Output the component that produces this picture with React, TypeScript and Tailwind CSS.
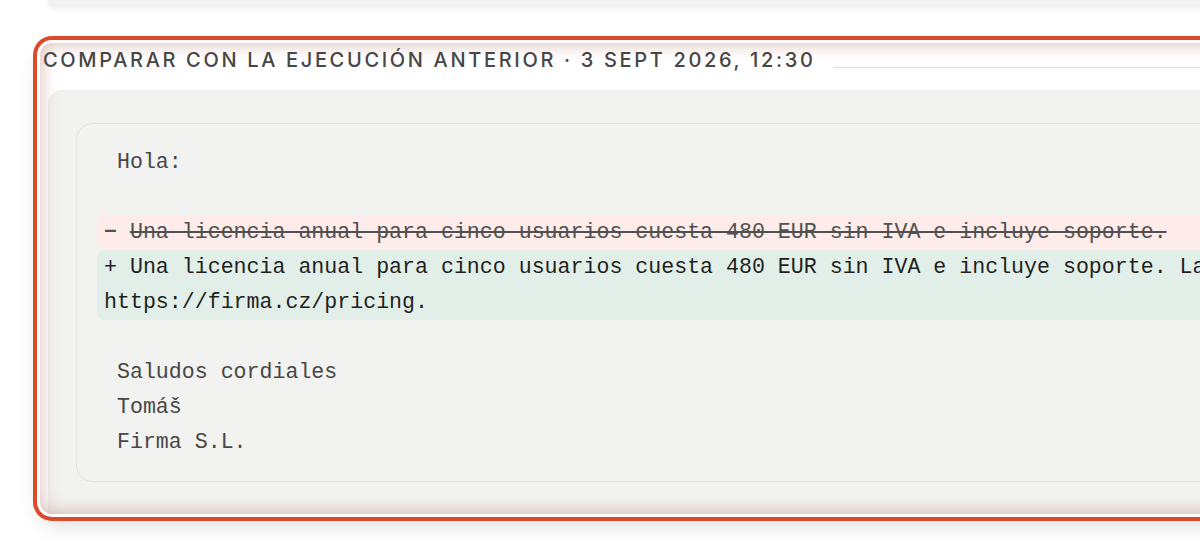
import React from 'react';

const mono = "font-['Liberation_Mono','DejaVu_Sans_Mono',monospace]";

type Line =
  | { kind: 'ctx'; text: string }
  | { kind: 'del'; text: string }
  | { kind: 'add'; text: string };

const lines: Line[] = [
  { kind: 'ctx', text: ' Hola:' },
  { kind: 'ctx', text: '' },
  { kind: 'del', text: 'Una licencia anual para cinco usuarios cuesta 480 EUR sin IVA e incluye soporte.' },
  {
    kind: 'add',
    text: 'Una licencia anual para cinco usuarios cuesta 480 EUR sin IVA e incluye soporte. La tarifa completa está en https://firma.cz/pricing.',
  },
  { kind: 'ctx', text: '' },
  { kind: 'ctx', text: ' Saludos cordiales' },
  { kind: 'ctx', text: ' Tomáš' },
  { kind: 'ctx', text: ' Firma S.L.' },
];

const DiffLine: React.FC<{ line: Line }> = ({ line }) => {
  if (line.kind === 'del') {
    return (
      <div className="-ml-[7px] pl-[7px] rounded-[8px] bg-[#fdecea] text-[#505050]">
        <span className="font-bold">− </span>
        <span className="line-through decoration-[#505050]">{line.text}</span>
      </div>
    );
  }
  if (line.kind === 'add') {
    return (
      <div className="-ml-[7px] pl-[7px] rounded-[8px] bg-[#e2efe8] text-[#1f1f1f]">
        + {line.text}
      </div>
    );
  }
  return <div className="text-[#474747] h-[35px]">{line.text}</div>;
};

export default function App() {
  return (
    <div className="w-[1200px] h-[560px] overflow-hidden bg-white">
      {/* previous card edge */}
      <div className="ml-[48px] h-[5px] w-[1300px] rounded-b-[16px] bg-[#f2f2f0] shadow-[0_2px_6px_rgba(0,0,0,0.12)]" />

      {/* highlighted compare section */}
      <div className="relative ml-[40px] mt-[38px] w-[1700px] h-[471px] rounded-[12px] bg-white flex flex-col shadow-[0_0_0_3px_#fff,0_0_0_7px_#dc4a2c,0_10px_22px_rgba(0,0,0,0.14)]">
        <div className="h-[47px] flex items-start pl-[3px] pt-[3px]">
          <span className="font-['Inter',sans-serif] text-[20px] leading-[28px] font-medium tracking-[0.133em] text-[#474747] whitespace-nowrap">
            COMPARAR CON LA EJECUCIÓN ANTERIOR · 3 SEPT 2026, 12:30
          </span>
          <div className="flex-1 h-px bg-[#dcdcda] ml-[18px] mt-[21px]" />
        </div>

        <div className="flex-1 ml-[8px] rounded-tl-[14px] bg-[#f2f2f0] pt-[33px] pl-[28px]">
          <div className="w-[1600px] rounded-[16px] border border-[#e1e1de] pl-[27px] pt-[21px] pb-[21px]">
            <div className={`${mono} text-[21.6px] leading-[35px] whitespace-pre-wrap w-[1500px]`}>
              {lines.map((l, i) => (
                <DiffLine key={i} line={l} />
              ))}
            </div>
          </div>
        </div>

        <div className="pointer-events-none absolute inset-0 rounded-[12px] shadow-[inset_0_0_18px_rgba(150,70,50,0.4)]" />
      </div>
    </div>
  );
}
